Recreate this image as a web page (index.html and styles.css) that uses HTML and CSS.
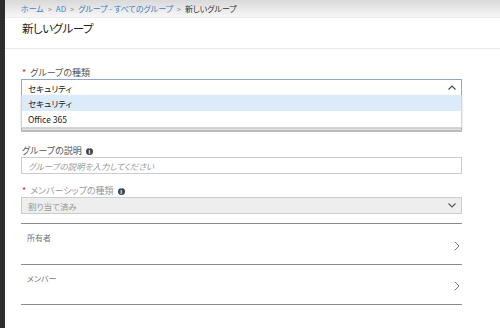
FILE: index.html
```html
<!DOCTYPE html>
<html lang="ja">
<head>
  <meta charset="UTF-8" />
  <title>新しいグループ</title>
  <link rel="stylesheet" href="styles.css">
</head>
<body>
  <div class="side-strip"></div>

  <div class="blade">
    <!-- breadcrumb -->
    <div class="crumbs">
      <a class="crumb">ホーム</a><span class="sep">&gt;</span>
      <a class="crumb">AD</a><span class="sep">&gt;</span>
      <a class="crumb">グループ - すべてのグループ</a><span class="sep">&gt;</span>
      <span class="crumb current">新しいグループ</span>
    </div>

    <div class="blade-header">
      <h1 class="title">新しいグループ</h1>
    </div>

    <div class="form">
      <div class="field field-type">
        <div class="label"><span class="req">*</span>グループの種類</div>
        <div class="select open">
          <span>セキュリティ</span>
          <svg class="chev" width="8" height="5" viewBox="0 0 8 5"><path d="M0.5 4.5 L4 1 L7.5 4.5" fill="none" stroke="#444" stroke-width="1.1"/></svg>
        </div>
        <ul class="dropdown">
          <li class="option selected">セキュリティ</li>
          <li class="option">Office 365</li>
        </ul>
      </div>

      <!-- name field, covered by the open dropdown -->
      <div class="field field-name">
        <div class="label"></div>
        <div class="input covered"></div>
      </div>

      <div class="field">
        <div class="label">グループの説明 <span class="info">i</span></div>
        <div class="input placeholder">グループの説明を入力してください</div>
      </div>

      <div class="field">
        <div class="label dim"><span class="req">*</span>メンバーシップの種類 <span class="info">i</span></div>
        <div class="select disabled">
          <span>割り当て済み</span>
          <svg class="chev" width="8" height="5" viewBox="0 0 8 5"><path d="M0.5 0.5 L4 4 L7.5 0.5" fill="none" stroke="#555" stroke-width="1.1"/></svg>
        </div>
      </div>

      <div class="nav-list">
        <div class="nav-row">
          <span class="nav-text">所有者</span>
          <svg class="arrow" width="6" height="10" viewBox="0 0 6 10"><path d="M0.7 0.7 L5 5 L0.7 9.3" fill="none" stroke="#777" stroke-width="1"/></svg>
        </div>
        <div class="nav-row">
          <span class="nav-text">メンバー</span>
          <svg class="arrow" width="6" height="10" viewBox="0 0 6 10"><path d="M0.7 0.7 L5 5 L0.7 9.3" fill="none" stroke="#777" stroke-width="1"/></svg>
        </div>
      </div>
    </div>
  </div>
</body>
</html>
```

FILE: styles.css
```css
body {
  margin: 0;
  padding: 0;
  display: flex;
  height: 328px;
  overflow: hidden;
  background: #fff;
  font-family: "Noto Sans CJK JP", "Noto Sans", sans-serif;
  font-feature-settings: "palt";
  color: #333;
}

.side-strip {
  width: 5px;
  flex: none;
  background: #2d2d2d;
}

.blade {
  flex: 1;
  display: flex;
  flex-direction: column;
}

.crumbs {
  height: 17px;
  display: flex;
  align-items: center;
  padding-left: 16px;
  background: linear-gradient(to bottom, #d9d9d9, #f7f7f7);
  border-bottom: 1px solid #ececec;
  font-size: 8px;
  white-space: nowrap;
}

.crumb {
  color: #3c7fc4;
}

.crumb.current {
  color: #333;
}

.sep {
  color: #888;
  margin: 0 4px;
  font-size: 7px;
}

.blade-header {
  height: 30px;
  padding-left: 17px;
  border-bottom: 1px solid #e9e9e9;
}

.title {
  margin: 0;
  font-size: 11.5px;
  letter-spacing: -0.5px;
  font-weight: normal;
  line-height: 21px;
  color: #222;
}

.form {
  padding: 18px 0 0 16px;
  width: 441px;
}

.field {
  position: relative;
  margin-bottom: 11px;
}

.field-type {
  margin-bottom: 7px;
}

.field-name {
  margin-bottom: 13px;
}

.label {
  height: 12px;
  line-height: 12px;
  font-size: 9px;
  color: #555;
  padding-left: 1px;
  display: flex;
  align-items: center;
}

.label.dim {
  color: #999;
}

.req {
  color: #d02a2a;
  margin-right: 4px;
}

.info {
  display: inline-flex;
  align-items: center;
  justify-content: center;
  width: 7px;
  height: 7px;
  margin-left: 4px;
  border-radius: 50%;
  background: #444;
  color: #fff;
  font-size: 6px;
  font-weight: bold;
  line-height: 7px;
}

.select,
.input {
  box-sizing: border-box;
  height: 17px;
  display: flex;
  align-items: center;
  justify-content: space-between;
  padding: 0 5px 0 6px;
  font-size: 8.5px;
  border: 1px solid #cdcdcd;
  background: #fff;
}

.select.open {
  border-color: #8ea6c8;
  color: #222;
}

.select.disabled {
  background: #eeeeee;
  border-color: #cccccc;
  color: #9a9a9a;
}

.input {
  color: #444;
}

.input.covered {
  border-color: #bdbdbd;
  border-bottom-width: 2px;
  background: #f1f1f1;
}

.input.placeholder {
  color: #999;
  font-style: italic;
}

.dropdown {
  position: absolute;
  top: 28px;
  left: 0;
  right: 0;
  margin: 0;
  padding: 0;
  list-style: none;
  background: #fff;
  border: 1px solid #d4d4d4;
  border-top: none;
  box-shadow: 0 1px 2px rgba(0, 0, 0, 0.2);
  z-index: 2;
}

.option {
  height: 16px;
  line-height: 16px;
  padding-left: 6px;
  font-size: 8.5px;
  color: #222;
}

.option.selected {
  background: #dcebfa;
}

.nav-list {
  margin-top: -2px;
}

.nav-row {
  height: 39.5px;
  border-top: 1.5px solid #8a8a8a;
  display: flex;
  justify-content: space-between;
  align-items: center;
  padding: 0 2px 0 6px;
}

.nav-row:last-child {
  border-bottom: 1.5px solid #8a8a8a;
}

.nav-text {
  align-self: flex-start;
  margin-top: 8px;
  font-size: 8px;
  color: #777;
}

.arrow {
  margin-top: 4px;
}
```
